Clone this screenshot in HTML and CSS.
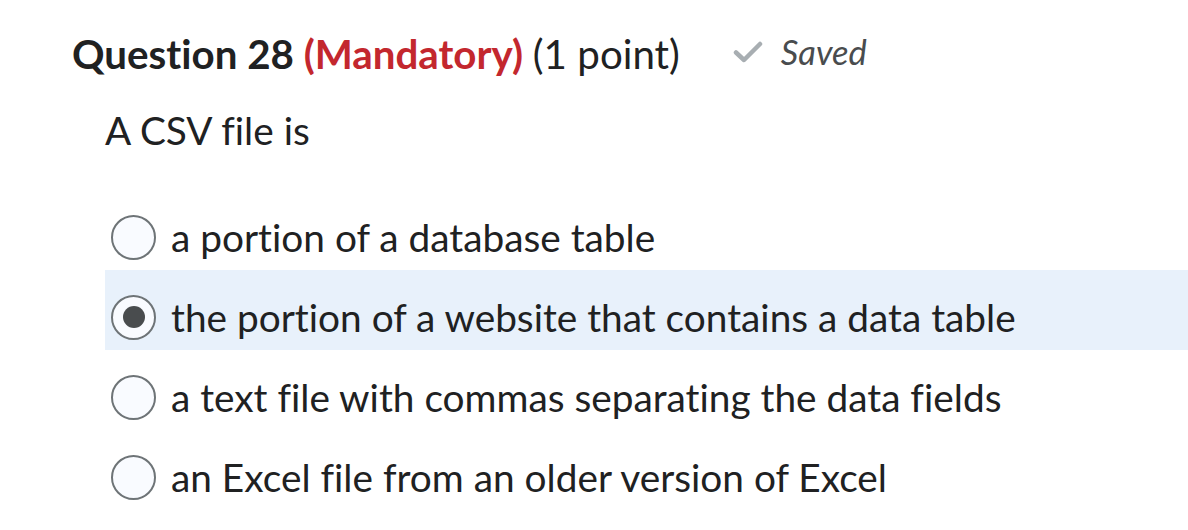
FILE: index.html
```html
<!DOCTYPE html>
<html>
<head>
<meta charset="utf-8">
<link rel="stylesheet" href="styles.css">
</head>
<body>
<div class="question">
  <div class="header">
    <h2 class="title">Question 28 <span class="mandatory">(Mandatory)</span> <span class="points">(1 point)</span></h2>
    <div class="saved">
      <svg class="check" width="30" height="22" viewBox="0 0 30 22"><path d="M3 11.5 L11 19 L27 3" fill="none" stroke="#a8aeb2" stroke-width="4.5" stroke-linecap="round" stroke-linejoin="round"/></svg>
      <span>Saved</span>
    </div>
  </div>
  <p class="prompt">A CSV file is</p>
  <div class="options">
    <label class="option"><span class="radio"></span><span class="text">a portion of a database table</span></label>
    <label class="option selected"><span class="radio checked"></span><span class="text">the portion of a website that contains a data table</span></label>
    <label class="option"><span class="radio"></span><span class="text">a text file with commas separating the data fields</span></label>
    <label class="option"><span class="radio"></span><span class="text">an Excel file from an older version of Excel</span></label>
  </div>
</div>
</body>
</html>
```
FILE: styles.css
```css
html, body {
  margin: 0;
  padding: 0;
  background: #ffffff;
}
body {
  font-family: Lato, "Liberation Sans", sans-serif;
  color: #202122;
  font-variant-ligatures: none;
  font-feature-settings: "liga" 0, "dlig" 0;
}
.question {
  padding: 22px 0 0 72px;
}
.header {
  display: flex;
  align-items: center;
  gap: 53px;
  height: 62px;
}
.title {
  margin: 0;
  font-size: 40.3px;
  font-weight: 700;
  white-space: nowrap;
}
.mandatory {
  color: #c3272e;
}
.points {
  font-weight: 400;
}
.saved {
  display: flex;
  align-items: center;
  gap: 18px;
  font-style: italic;
  font-size: 34.5px;
  color: #494c4e;
  margin-top: -3px;
}
.check {
  display: block;
}
.prompt {
  margin: 0;
  padding: 18px 0 0 33px;
  font-size: 38.8px;
  line-height: 56px;
}
.options {
  margin: 32px 0 0 33px;
  display: flex;
  flex-direction: column;
}
.option {
  box-sizing: border-box;
  display: flex;
  align-items: center;
  height: 80px;
  padding: 14px 0 0 6px;
  gap: 15px;
  font-size: 38.8px;
}
.option.selected {
  background: #e8f1fb;
}
.radio {
  box-sizing: border-box;
  width: 45px;
  height: 45px;
  border: 2px solid #6e7477;
  border-radius: 50%;
  background: #f9fbff;
  display: flex;
  align-items: center;
  justify-content: center;
  flex-shrink: 0;
}
.radio.checked::after {
  content: "";
  width: 22px;
  height: 22px;
  border-radius: 50%;
  background: #494c4e;
}
.text {
  white-space: nowrap;
}
```
